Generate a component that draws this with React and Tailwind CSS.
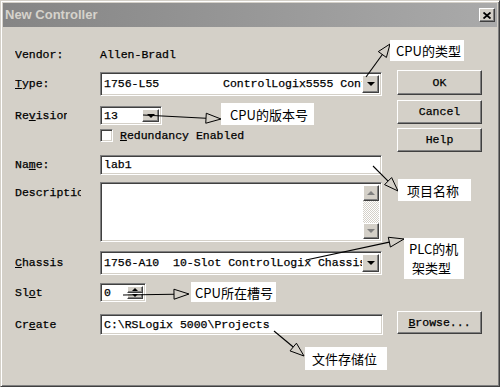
import React from "react";

const mono = "font-['Liberation_Mono','Noto_Sans_CJK_SC',monospace] text-[11.5px] leading-none text-black [-webkit-text-stroke:0.25px_#000]";
const sunken = "border border-t-[#808080] border-l-[#808080] border-b-white border-r-white bg-white shadow-[inset_1px_1px_0_#404040,inset_-1px_-1px_0_#d4d0c8]";
const raised = "border border-t-white border-l-white border-b-[#404040] border-r-[#404040] bg-[#d4d0c8] shadow-[inset_-1px_-1px_0_#808080]";

function DownTri() {
  return <span className="block h-0 w-0 border-x-[4px] border-t-[4px] border-x-transparent border-t-black" />;
}

function UpTri({ color = "border-b-black" }) {
  return <span className={`block h-0 w-0 border-x-[4px] border-b-[4px] border-x-transparent ${color}`} />;
}

function DropBtn({ w = "w-[17px]" }) {
  return (
    <div className={`${raised} ${w} h-full flex items-center justify-center`}>
      <DownTri />
    </div>
  );
}

function Button({ children, className = "" }) {
  return (
    <div className={`${raised} ${mono} w-[85px] flex items-center justify-center ${className}`}>
      {children}
    </div>
  );
}

function Label({ children, clip = "" }) {
  return (
    <div className={`w-[85px] shrink-0 ${mono}`}>
      <div className={`overflow-hidden whitespace-nowrap ${clip}`}>{children}</div>
    </div>
  );
}

function Arrow({ x1, y1, x2, y2, len = 14, w = 5 }) {
  const dx = x2 - x1;
  const dy = y2 - y1;
  const d = Math.hypot(dx, dy);
  const ux = dx / d;
  const uy = dy / d;
  const bx = x2 - ux * len;
  const by = y2 - uy * len;
  const px = -uy * w;
  const py = ux * w;
  return (
    <g>
      <line x1={x1} y1={y1} x2={bx} y2={by} stroke="#000" strokeWidth="1.1" />
      <polygon
        points={`${x2},${y2} ${bx + px},${by + py} ${bx - px},${by - py}`}
        fill="none"
        stroke="#000"
        strokeWidth="1"
      />
    </g>
  );
}

function Note({ className, children }) {
  return (
    <div className={`absolute bg-white text-[13px] leading-[19px] text-black font-['Noto_Sans_CJK_SC',sans-serif] ${className}`}>
      {children}
    </div>
  );
}

export default function App() {
  return (
    <div className="relative w-[500px] h-[387px] overflow-hidden bg-[#d4d0c8] p-[2px] border border-t-[#d4d0c8] border-l-[#d4d0c8] border-b-[#404040] border-r-[#404040] shadow-[inset_1px_1px_0_#fff,inset_-1px_-1px_0_#808080]">
      {/* title bar */}
      <div className="h-[24px] flex items-center justify-between pl-[2px] pr-[2px] bg-linear-to-r from-[#858585] to-[#aaaaaa]">
        <span className="font-['Liberation_Sans',sans-serif] font-bold text-[13px] text-[#d6d3cc]">New Controller</span>
        <div className={`${raised} w-[16px] h-[14px] flex items-center justify-center`}>
          <svg width="8" height="7" viewBox="0 0 8 7">
            <path d="M0.5 0.5 L7.5 6.5 M7.5 0.5 L0.5 6.5" stroke="#000" strokeWidth="1.8" />
          </svg>
        </div>
      </div>

      {/* body */}
      <div className="pl-[12px]">
        <div className="flex">
          <div className="w-[367px] flex flex-col">
            <div className="mt-[20px] h-[16px] flex items-center">
              <Label>Vendor:</Label>
              <span className={mono}>Allen-Bradl</span>
            </div>

            <div className="mt-[9px] h-[24px] flex items-center">
              <Label><span className="underline">T</span>ype:</Label>
              <div className={`${sunken} w-[282px] h-full flex items-stretch p-[2px]`}>
                <div className={`${mono} flex-1 flex items-center pl-[1px] overflow-hidden whitespace-nowrap`}>
                  <span className="w-[119px] shrink-0">1756-L55</span>
                  <span>ControlLogix5555 Cont</span>
                </div>
                <DropBtn />
              </div>
            </div>

            <div className="mt-[10px] h-[19px] flex items-center">
              <Label clip="w-[52px]">Re<span className="underline">v</span>ision</Label>
              <div className={`${sunken} w-[62px] h-full flex items-stretch p-[2px]`}>
                <div className={`${mono} flex-1 flex items-center pl-[1px]`}>13</div>
                <DropBtn />
              </div>
            </div>

            <div className="mt-[4px] h-[13px] flex items-center pl-[85px]">
              <div className={`${sunken} w-[13px] h-[13px] shrink-0`} />
              <div className={`${mono} ml-[7px] w-[125px] overflow-hidden whitespace-nowrap`}>
                <span className="underline">R</span>edundancy Enabled
              </div>
            </div>

            <div className="mt-[13px] h-[20px] flex items-center">
              <Label>Na<span className="underline">m</span>e:</Label>
              <div className={`${sunken} w-[282px] h-full flex items-center px-[3px] ${mono}`}>lab1</div>
            </div>

            <div className="mt-[7px] h-[60px] flex items-start">
              <div className="pt-[5px]">
                <Label clip="w-[66px]">Description</Label>
              </div>
              <div className={`${sunken} w-[282px] h-full flex justify-end p-[2px]`}>
                <div className="w-[16px] h-full flex flex-col">
                  <div className={`${raised} h-[16px] flex items-center justify-center`}>
                    <UpTri color="border-b-[#808080]" />
                  </div>
                  <div className="flex-1 bg-[repeating-conic-gradient(#ffffff_0_25%,#d4d0c8_0_50%)] bg-[length:2px_2px]" />
                  <div className={`${raised} h-[16px] flex items-center justify-center`}>
                    <span className="block h-0 w-0 border-x-[4px] border-t-[4px] border-x-transparent border-t-[#808080]" />
                  </div>
                </div>
              </div>
            </div>

            <div className="mt-[9px] h-[24px] flex items-center">
              <Label><span className="underline">C</span>hassis</Label>
              <div className={`${sunken} w-[282px] h-full flex items-stretch p-[2px]`}>
                <div className={`${mono} flex-1 flex items-center pl-[1px] overflow-hidden whitespace-nowrap`}>
                  1756-A10&nbsp;&nbsp;10-Slot ControlLogix Chassis
                </div>
                <DropBtn />
              </div>
            </div>

            <div className="mt-[8px] h-[19px] flex items-center">
              <Label>Sl<span className="underline">o</span>t</Label>
              <div className={`${sunken} w-[46px] h-full flex items-stretch p-[2px]`}>
                <div className={`${mono} flex-1 flex items-center pl-[1px]`}>0</div>
                <div className="w-[16px] flex flex-col">
                  <div className={`${raised} flex-1 flex items-center justify-center`}>
                    <span className="block h-0 w-0 border-x-[3px] border-b-[3px] border-x-transparent border-b-black" />
                  </div>
                  <div className={`${raised} flex-1 flex items-center justify-center`}>
                    <span className="block h-0 w-0 border-x-[3px] border-t-[3px] border-x-transparent border-t-black" />
                  </div>
                </div>
              </div>
            </div>
          </div>

          <div className="ml-[15px] pt-[43px] flex flex-col">
            <Button className="h-[25px]">OK</Button>
            <Button className="h-[24px] mt-[5px]">Cancel</Button>
            <Button className="h-[24px] mt-[4px]">Help</Button>
          </div>
        </div>

        <div className="mt-[12px] flex items-start">
          <div className="h-[21px] flex items-center">
            <Label>Cr<span className="underline">e</span>ate</Label>
          </div>
          <div className={`${sunken} w-[283px] h-[21px] flex items-center px-[3px] ${mono}`}>C:\RSLogix 5000\Projects</div>
          <Button className="h-[23px] ml-[14px] -mt-[3px]">
            <span><span className="underline">B</span>rowse...</span>
          </Button>
        </div>
      </div>

      {/* annotations */}
      <svg className="absolute left-0 top-0 pointer-events-none" width="500" height="387">
        <Arrow x1={365} y1={76} x2={389} y2={43} len={13} />
        <Arrow x1={142} y1={114} x2={220} y2={118} len={15} />
        <Arrow x1={372} y1={165} x2={397} y2={190} len={14} />
        <Arrow x1={305} y1={259} x2={403} y2={238} len={15} />
        <Arrow x1={122} y1={294} x2={188} y2={293} len={15} />
        <Arrow x1={273} y1={330} x2={303} y2={355} len={14} />
      </svg>

      <Note className="left-[389px] top-[39px] w-[74px] h-[21px] pl-[6px] flex items-center">CPU的类型</Note>
      <Note className="left-[220px] top-[102px] w-[93px] h-[22px] pl-[9px] flex items-center">CPU的版本号</Note>
      <Note className="left-[397px] top-[178px] w-[73px] h-[22px] pl-[9px] flex items-center">项目名称</Note>
      <Note className="left-[403px] top-[237px] w-[60px] h-[41px] pl-[5px] pt-[1px]">
        <div>PLC的机</div>
        <div className="pl-[3px]">架类型</div>
      </Note>
      <Note className="left-[190px] top-[281px] w-[85px] h-[20px] pl-[4px] flex items-center">CPU所在槽号</Note>
      <Note className="left-[304px] top-[346px] w-[82px] h-[23px] pl-[7px] flex items-center">文件存储位</Note>
    </div>
  );
}
